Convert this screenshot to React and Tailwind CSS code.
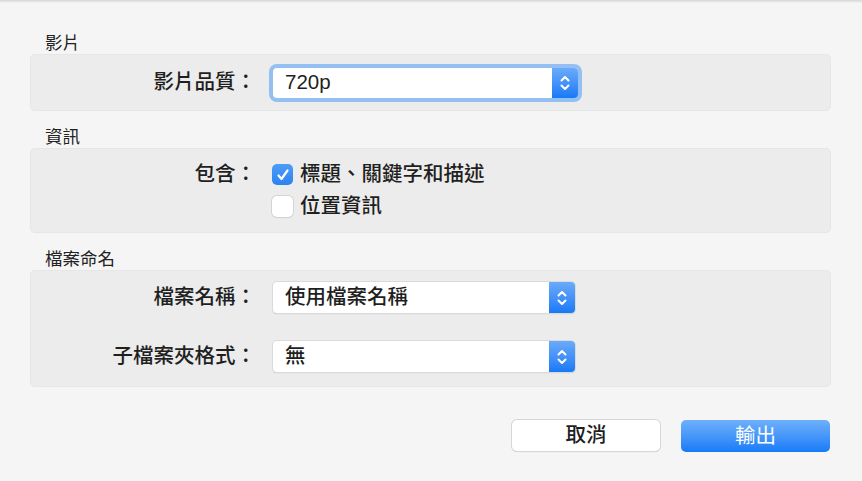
const font = { fontFamily: '"Liberation Sans", "Noto Sans CJK TC", sans-serif' };

function Stepper() {
  return (
    <div className="w-[26px] h-full flex items-center justify-center rounded-r-[4px] bg-gradient-to-b from-[#6aaafa] to-[#1679f6]">
      <svg width="12" height="20" viewBox="0 0 12 20" fill="none" stroke="white" strokeWidth="2" strokeLinecap="round" strokeLinejoin="round">
        <path d="M2.5 7.5 6 4l3.5 3.5" />
        <path d="M2.5 12.5 6 16l3.5-3.5" />
      </svg>
    </div>
  );
}

function Popup({ value, width, focused }) {
  return (
    <div
      className={`flex items-stretch bg-white rounded-[4px] ${
        focused
          ? 'h-[30px] shadow-[0_0_0_4px_#94bff3]'
          : 'h-[31px] shadow-[0_0_0_1px_#dadada,0_1px_1px_rgba(0,0,0,0.25)]'
      }`}
      style={{ width }}
    >
      <div className="flex-1 flex items-center pl-[12px] text-[20.5px] font-medium text-[#1f1f1f]">{value}</div>
      <Stepper />
    </div>
  );
}

function Checkbox({ checked }) {
  return checked ? (
    <div className="w-[21px] h-[21px] rounded-[5px] bg-gradient-to-b from-[#4d9cf7] to-[#2b82f4] flex items-center justify-center">
      <svg width="14" height="14" viewBox="0 0 14 14" fill="none" stroke="white" strokeWidth="2.2" strokeLinecap="round" strokeLinejoin="round">
        <path d="M2.5 7.5 5.5 11 11.5 2.5" />
      </svg>
    </div>
  ) : (
    <div className="w-[21px] h-[21px] rounded-[5px] bg-white shadow-[0_0_0_1px_#d4d4d4,0_1px_1px_rgba(0,0,0,0.12)]" />
  );
}

function Label({ children }) {
  return <div className="w-[225px] text-right text-[20.5px] font-medium text-[#1f1f1f] shrink-0 mr-[17px]">{children}</div>;
}

function Section({ title, children, className }) {
  return (
    <div>
      <div className="h-[22px] flex items-center pl-[15px] text-[17.5px] text-[#222]">{title}</div>
      <div className={`w-[801px] bg-[#ececec] rounded-[5px] border border-[#e6e6e6] ${className}`}>{children}</div>
    </div>
  );
}

export default function App() {
  return (
    <div className="w-[862px] h-[481px] bg-[#f5f5f5] overflow-hidden" style={font}>
      <div className="h-[3px] bg-gradient-to-b from-[#d6d6d6] to-[#f5f5f5]" />
      <div className="pl-[30px] pt-[29px] flex flex-col gap-[15px]">
        <Section title="影片" className="h-[57px] flex items-center">
          <div className="flex items-center">
            <Label>影片品質：</Label>
            <Popup value="720p" width={305} focused />
          </div>
        </Section>

        <Section title="資訊" className="h-[85px] flex flex-col justify-center">
          <div className="flex items-center h-[32px]">
            <Label>包含：</Label>
            <div className="-ml-[1px] flex items-center gap-[7px] text-[20.5px] font-medium text-[#1f1f1f]">
              <Checkbox checked />
              <span>標題、關鍵字和描述</span>
            </div>
          </div>
          <div className="flex items-center h-[32px]">
            <div className="w-[242px] shrink-0" />
            <div className="-ml-[1px] flex items-center gap-[7px] text-[20.5px] font-medium text-[#1f1f1f]">
              <Checkbox />
              <span>位置資訊</span>
            </div>
          </div>
        </Section>

        <Section title="檔案命名" className="h-[117px] flex flex-col pt-[11px] gap-[28px]">
          <div className="flex items-center">
            <Label>檔案名稱：</Label>
            <Popup value="使用檔案名稱" width={302} />
          </div>
          <div className="flex items-center">
            <Label>子檔案夾格式：</Label>
            <Popup value="無" width={302} />
          </div>
        </Section>
      </div>

      <div className="flex justify-end gap-[21px] pr-[32px] mt-[33px]">
        <button className="w-[148px] h-[31px] rounded-[5px] bg-white text-[20.5px] font-medium text-[#1f1f1f] shadow-[0_0_0_1px_#d6d6d6,0_1px_1px_rgba(0,0,0,0.2)] flex items-center justify-center">
          取消
        </button>
        <button className="w-[149px] h-[32px] rounded-[5px] bg-gradient-to-b from-[#6db0fb] to-[#137bf7] text-[20.5px] text-white flex items-center justify-center">
          輸出
        </button>
      </div>
    </div>
  );
}
